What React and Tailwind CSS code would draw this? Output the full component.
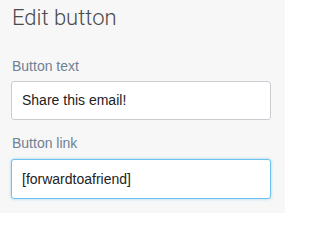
export default function App() {
  return (
    <div className="w-[285px] h-[213px] bg-[#f7f7f7] pl-[11px] pr-[14px] pt-[7px] overflow-hidden font-['Liberation_Sans',Arial,sans-serif]">
      <h2 className="text-[22px] leading-[22px] font-light text-[#4a4a4a] pl-px font-['Roboto',sans-serif]">Edit button</h2>

      {/* Button text */}
      <label className="block mt-[27px] text-[14px] leading-[20px] text-[#6f8194] pl-px">Button text</label>
      <div className="mt-[5px] h-[39px] bg-white border border-[#c9cdd2] rounded-[3px] px-[10px] flex items-center text-[14px] text-[#222222]">
        Share this email!
      </div>

      {/* Button link */}
      <label className="block mt-[13px] text-[14px] leading-[20px] text-[#6f8194] pl-px">Button link</label>
      <div className="mt-[6px] h-[40px] bg-white border border-[#6cc3ef] rounded-[3px] px-[10px] flex items-center text-[14px] text-[#222222] shadow-[0_0_3px_rgba(102,186,233,0.6)]">
        [forwardtoafriend]
      </div>
    </div>
  );
}
